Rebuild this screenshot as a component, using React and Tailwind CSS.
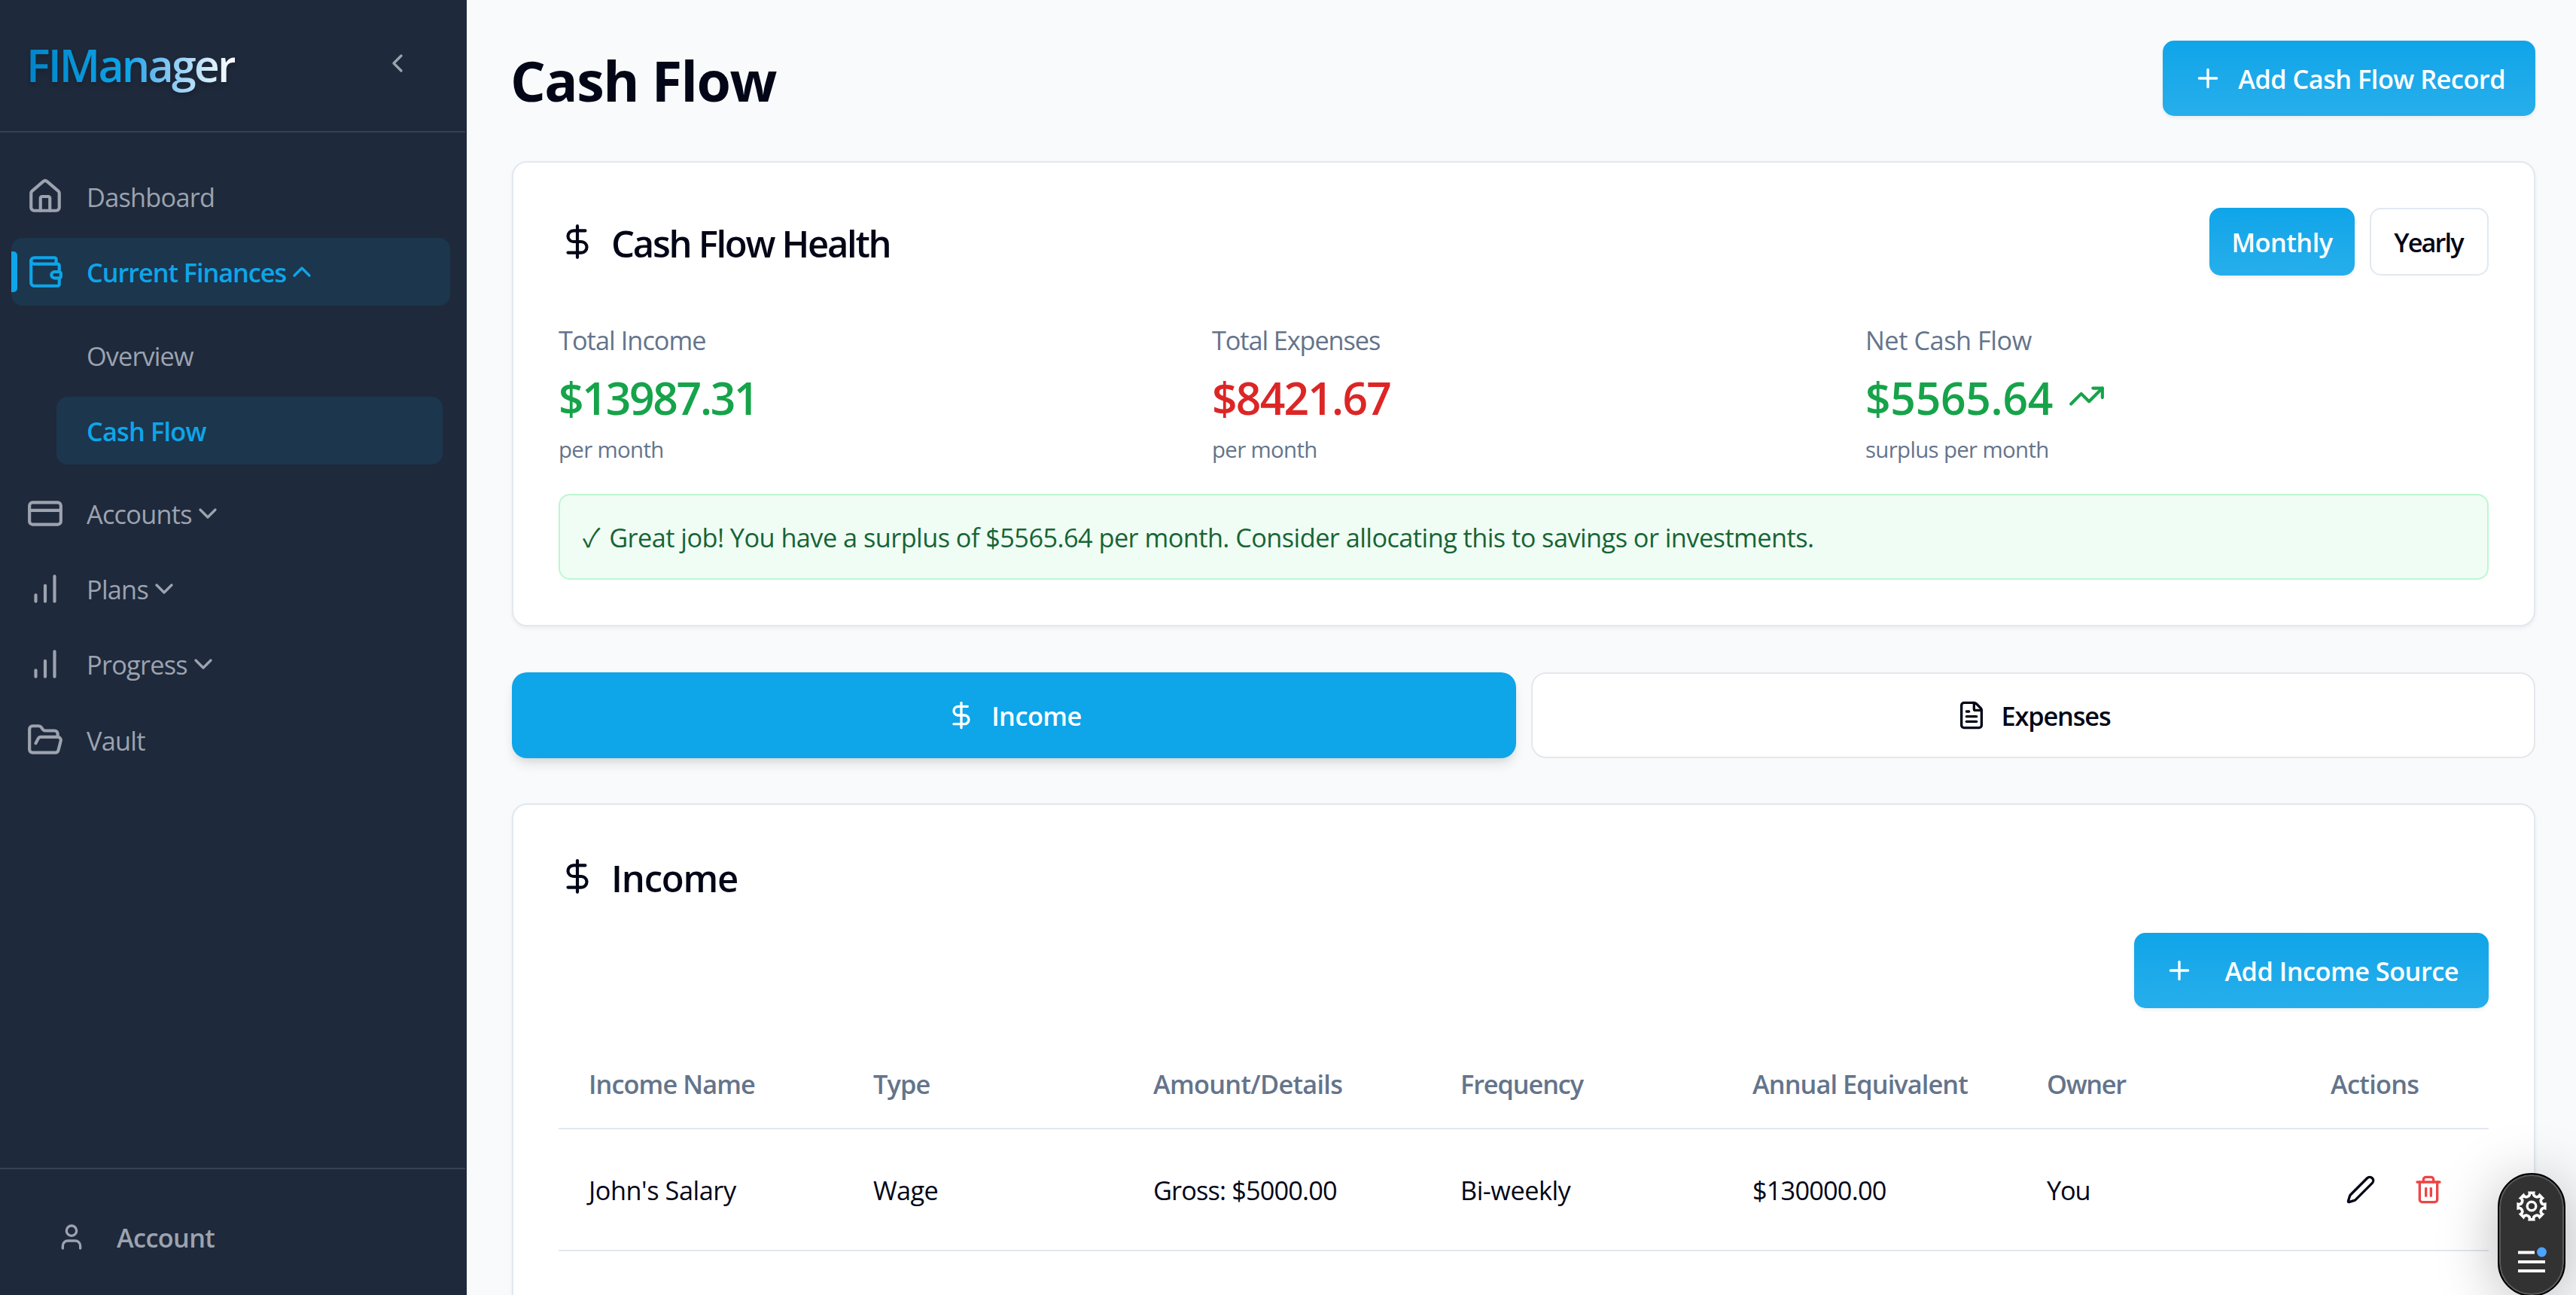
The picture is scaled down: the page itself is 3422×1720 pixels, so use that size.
import { useState } from "react";
import {
  ChevronDown,
  ChevronLeft,
  ChevronUp,
  CreditCard,
  DollarSign,
  FileText,
  FolderOpen,
  House,
  Pen,
  Plus,
  Trash2,
  TrendingUp,
  User,
  Wallet,
} from "lucide-react";

function BarsIcon({ className }) {
  return (
    <svg viewBox="0 0 24 24" fill="none" stroke="currentColor" strokeWidth="2" strokeLinecap="round" className={className}>
      <path d="M12 20V10M18 20V4M6 20v-4" />
    </svg>
  );
}

const gearPoint = (deg, r) => {
  const a = ((deg - 90) * Math.PI) / 180;
  return `${(20 + r * Math.cos(a)).toFixed(2)} ${(20 + r * Math.sin(a)).toFixed(2)}`;
};

// eight flat teeth joined by scalloped valleys
const gearPath =
  [0, 45, 90, 135, 180, 225, 270, 315]
    .map((t, i) => `${i === 0 ? "M" : "A4.4 4.4 0 0 0 "}${gearPoint(t - 8.5, 18)}L${gearPoint(t + 8.5, 18)}`)
    .join("") + `A4.4 4.4 0 0 0 ${gearPoint(-8.5, 18)}Z`;

function GearIcon() {
  return (
    <svg viewBox="0 0 40 40" fill="none" stroke="white" className="size-10">
      <path d={gearPath} strokeWidth="3.6" />
      <circle cx="20" cy="20" r="5.8" strokeWidth="3.4" />
    </svg>
  );
}

function NavItem({ icon: Icon, label, chevron: Chevron, active }) {
  return (
    <div className={`relative flex h-[90px] items-center overflow-hidden rounded-[15px] px-5 ${active ? "bg-sky-500/10 font-semibold text-[#0ea5e9]" : "text-[#9ca3af]"}`}>
      {active && <span className="absolute left-0 top-[18px] h-[54px] w-2 rounded-r-[5px] bg-[#0ea5e9]" />}
      <Icon className="size-[50px] shrink-0" />
      <span className={`ml-[30px] translate-y-px ${active ? "tracking-[-1.05px]" : "tracking-[-0.75px]"}`}>{label}</span>
      {Chevron && <Chevron className="ml-px size-10" />}
    </div>
  );
}

function SubItem({ label, active }) {
  return (
    <div className={`flex h-[90px] items-center rounded-[15px] px-10 ${active ? "bg-sky-500/10 font-semibold tracking-[-0.8px] text-[#0ea5e9]" : "tracking-[-0.88px] text-[#9ca3af]"}`}>
      <span className="translate-y-px">{label}</span>
    </div>
  );
}

function Sidebar() {
  return (
    <aside className="flex h-full w-[620px] shrink-0 flex-col border-r-2 border-[#1e293b] bg-[#1e293b]">
      <div className="flex h-[176px] items-center justify-between border-b-2 border-[#374151] pb-[6px] pl-[35px] pr-[70px]">
        <span className="translate-y-0.5 bg-linear-to-r from-[#0284c7] via-[#0ea5e9] to-white bg-clip-text text-[59px] font-semibold leading-[80px] tracking-[-2.8px] text-transparent drop-shadow-[0_4px_3px_rgba(0,0,0,0.2)]">
          FIManager
        </span>
        <ChevronLeft className="size-10 text-[#9ca3af]" />
      </div>
      <nav className="flex flex-1 flex-col gap-[10.3px] pl-[15px] pr-5 pt-10">
        <NavItem icon={House} label="Dashboard" />
        <NavItem icon={Wallet} label="Current Finances" chevron={ChevronUp} active />
        <div className="my-2.5 ml-[60px] mr-2.5 flex flex-col gap-2.5">
          <SubItem label="Overview" />
          <SubItem label="Cash Flow" active />
        </div>
        <NavItem icon={CreditCard} label="Accounts" chevron={ChevronDown} />
        <NavItem icon={BarsIcon} label="Plans" chevron={ChevronDown} />
        <NavItem icon={BarsIcon} label="Progress" chevron={ChevronDown} />
        <NavItem icon={FolderOpen} label="Vault" />
      </nav>
      <div className="h-[169px] border-t-2 border-[#374151] px-[35px] pt-10">
        <button className="flex h-[100px] items-center gap-10 px-10 font-semibold tracking-[-0.65px] text-[#9ca3af]">
          <User className="size-10" />
          <span className="translate-y-px">Account</span>
        </button>
      </div>
    </aside>
  );
}

function PrimaryButton({ children, className, onClick }) {
  return (
    <button onClick={onClick} className={`flex items-center rounded-[15px] bg-linear-to-b from-[#0ea5e9] to-[#26aeeb] font-semibold text-white shadow-[0_2.5px_5px_rgba(0,0,0,0.06)] ${className}`}>
      {children}
    </button>
  );
}

function Card({ children, className }) {
  return (
    <section className={`rounded-[20px] border-2 border-[#e2e8f0] bg-white p-[60px] shadow-[0_2.5px_5px_rgba(0,0,0,0.05)] ${className}`}>
      {children}
    </section>
  );
}

function Stat({ label, value, note, className, color, children }) {
  return (
    <div className="text-[#64748b]">
      <p className={`translate-y-px leading-[50px] ${className}`}>{label}</p>
      <div className={`mt-2.5 flex h-20 items-center gap-5 ${color}`}>
        {value}
        {children}
      </div>
      <p className="mt-2.5 translate-y-px text-[29.4px] leading-10 tracking-[-0.65px]">{note}</p>
    </div>
  );
}

function HealthCard() {
  const [period, setPeriod] = useState("monthly");
  return (
    <Card className="mt-[60px] h-[618px]">
      <div className="flex h-[90px] items-center justify-between">
        <h2 className="flex items-center gap-5 text-[49px] font-semibold leading-[70px] tracking-[-2.3px]">
          <DollarSign className="size-[50px]" />
          <span className="translate-y-0.5">Cash Flow Health</span>
        </h2>
        <div className="flex gap-5" data-period={period}>
          <PrimaryButton onClick={() => setPeriod("monthly")} className="h-[90px] w-[193px] justify-center tracking-[-0.5px]">
            <span className="translate-y-px">Monthly</span>
          </PrimaryButton>
          <button onClick={() => setPeriod("yearly")} className="flex h-[90px] w-[158px] items-center justify-center rounded-[15px] border-2 border-[#e2e8f0] bg-white font-semibold tracking-[-1.9px]">
            <span className="-ml-0.5 translate-y-px">Yearly</span>
          </button>
        </div>
      </div>
      <div className="mt-[60px] grid grid-cols-3 gap-10">
        <Stat label="Total Income" note="per month" className="tracking-[-0.95px]" color="text-[#16a34a]"
          value={<span className="translate-y-0.5 text-[58.8px] font-semibold tracking-[-2.3px]">$13987.31</span>} />
        <Stat label="Total Expenses" note="per month" className="tracking-[-1.1px]" color="text-[#dc2626]"
          value={<span className="translate-y-0.5 text-[58.8px] font-semibold tracking-[-1.8px]">$8421.67</span>} />
        <Stat label="Net Cash Flow" note="surplus per month" className="tracking-[-0.45px]" color="text-[#16a34a]"
          value={<span className="translate-y-0.5 text-[58.8px] font-semibold tracking-[-0.3px]">$5565.64</span>}>
          <TrendingUp className="size-[50px]" />
        </Stat>
      </div>
      <div className="mt-10 rounded-[15px] border-2 border-[#bbf7d0] bg-[#f0fdf4] px-[30px] pb-[29px] pt-[31px] leading-[50px] tracking-[-0.55px] text-[#166534]">
        <span className="mr-1">✓</span> Great job! You have a surplus of $5565.64 per month. Consider allocating this to savings or investments.
      </div>
    </Card>
  );
}

function Tabs({ tab, setTab }) {
  const base = "flex h-[114px] items-center justify-center gap-5 rounded-[20px] font-semibold";
  const on = "bg-[#0ea5e9] text-white shadow-[0_10px_15px_-2.5px_rgba(0,0,0,0.1),0_5px_10px_-5px_rgba(0,0,0,0.1)]";
  const off = "border-2 border-[#e5e7eb] bg-white";
  return (
    <div className="mt-[61px] grid grid-cols-2 gap-5">
      <button onClick={() => setTab("income")} className={`${base} tracking-[-0.5px] ${tab === "income" ? on : off}`}>
        <DollarSign className="size-10" />
        <span className="translate-y-px">Income</span>
      </button>
      <button onClick={() => setTab("expenses")} className={`${base} tracking-[-1.15px] ${tab === "expenses" ? on : off}`}>
        <FileText className="size-10" />
        <span className="translate-y-px">Expenses</span>
      </button>
    </div>
  );
}

const income = [
  { name: "John's Salary", type: "Wage", details: "Gross: $5000.00", frequency: "Bi-weekly", annual: "$130000.00", owner: "You" },
];

function IncomeTable() {
  return (
    <table className="mt-10 w-full table-fixed border-separate border-spacing-0 text-left">
      <colgroup>
        <col className="w-[378px]" />
        <col className="w-[372px]" />
        <col className="w-[408px]" />
        <col className="w-[388px]" />
        <col className="w-[391px]" />
        <col className="w-[377px]" />
        <col className="w-[250px]" />
      </colgroup>
      <thead>
        <tr className="h-[121px] text-[#64748b] *:border-b-2 *:border-[#e2e8f0] *:px-10 *:pt-0.5 *:font-semibold">
          <th className="tracking-[-0.9px]">Income Name</th>
          <th className="tracking-[-0.9px]">Type</th>
          <th className="tracking-[-0.7px]">Amount/Details</th>
          <th className="tracking-[-1.1px]">Frequency</th>
          <th className="tracking-[-0.9px]">Annual Equivalent</th>
          <th className="tracking-[-1.3px]">Owner</th>
          <th className="tracking-[-0.7px]">Actions</th>
        </tr>
      </thead>
      <tbody>
        {income.map((row) => (
          <tr key={row.name} className="h-[162px] *:border-b-2 *:border-[#e2e8f0] *:px-10 *:pt-0.5">
            <td className="tracking-[-0.45px]">{row.name}</td>
            <td className="tracking-[-0.6px]">{row.type}</td>
            <td className="tracking-[-0.85px]">{row.details}</td>
            <td className="tracking-[-0.5px]">{row.frequency}</td>
            <td className="tracking-[-0.8px]">{row.annual}</td>
            <td className="tracking-[-1.2px]">{row.owner}</td>
            <td>
              <div className="-mt-0.5 flex gap-2.5">
                <button className="flex size-20 items-center justify-center"><Pen className="size-10" /></button>
                <button className="flex size-20 items-center justify-center text-[#ef4444]"><Trash2 className="size-10" /></button>
              </div>
            </td>
          </tr>
        ))}
      </tbody>
    </table>
  );
}

function IncomeCard() {
  return (
    <Card className="mt-[60px] h-[900px]">
      <h2 className="flex items-center gap-5 text-[49px] font-semibold leading-[70px] tracking-[-1.2px]">
        <DollarSign className="size-[50px]" />
        <span className="translate-y-0.5">Income</span>
      </h2>
      <div className="mt-10 flex justify-end">
        <PrimaryButton className="h-[100px] px-10 tracking-[-0.5px]">
          <Plus className="mr-10 size-10" />
          <span className="translate-y-px">Add Income Source</span>
        </PrimaryButton>
      </div>
      <IncomeTable />
    </Card>
  );
}

function FloatingTools() {
  return (
    <div className="absolute right-[14px] top-[1558px] flex h-[164px] w-[90px] flex-col items-center rounded-full border-2 border-black bg-[#323232] pt-[22px] shadow-[0_10px_80px_rgba(0,0,0,0.28)] inset-ring-2 inset-ring-[#5a5a5a]">
      <GearIcon />
      <svg viewBox="0 0 40 34" className="mt-[34px] h-[34px] w-10">
        <path d="M2 7.5h22M2 20h36M2 32h36" stroke="white" strokeWidth="4" />
        <circle cx="33.5" cy="7" r="6.4" fill="#4da3ff" />
      </svg>
    </div>
  );
}

export default function App() {
  const [tab, setTab] = useState("income");

  return (
    <div className="relative flex h-[1720px] w-[3422px] overflow-hidden bg-[#f8fafc] font-['Open_Sans','Noto_Sans_CJK_JP',sans-serif] text-[34.3px] leading-[50px] text-[#020617]">
      <Sidebar />
      <main className="flex-1 pl-[60px] pr-[54px] pt-[54px]">
        <div className="flex h-[100px] items-center justify-between">
          <h1 className="-ml-0.5 translate-y-[3px] text-[73.5px] font-bold leading-[90px] tracking-[-1.5px]">Cash Flow</h1>
          <PrimaryButton className="h-[100px] px-10 tracking-[-0.5px]">
            <Plus className="mr-5 size-10" />
            <span className="translate-y-px">Add Cash Flow Record</span>
          </PrimaryButton>
        </div>
        <HealthCard />
        <Tabs tab={tab} setTab={setTab} />
        <IncomeCard />
      </main>
      <FloatingTools />
    </div>
  );
}
